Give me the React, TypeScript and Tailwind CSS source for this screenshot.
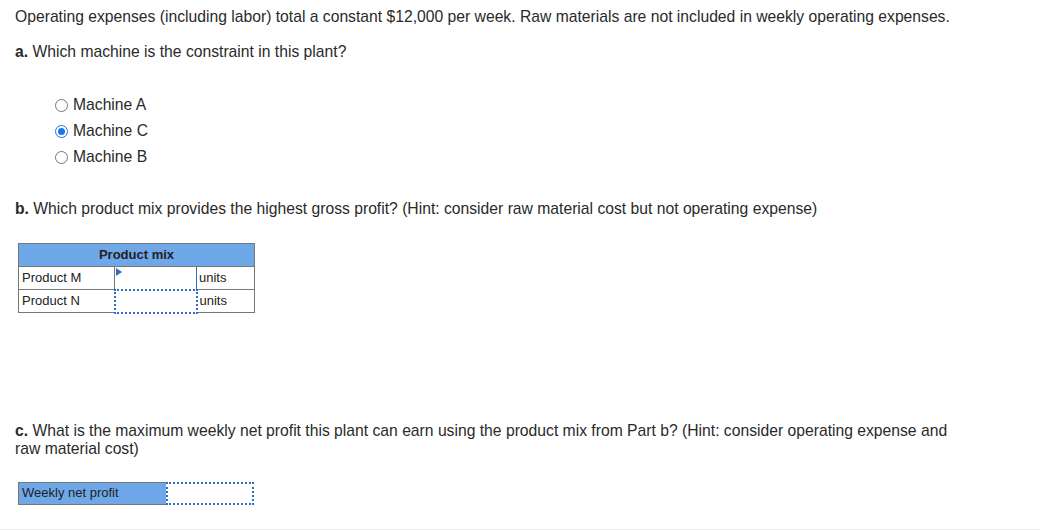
import React from "react";

const Radio: React.FC<{ label: string; checked?: boolean }> = ({ label, checked }) => (
  <label className="flex h-[26px] items-center gap-[5px]">
    {checked ? (
      <span className="flex h-[13px] w-[13px] items-center justify-center rounded-full border-[1.5px] border-[#1a73e8] bg-white">
        <span className="h-[7px] w-[7px] rounded-full bg-[#1a73e8]" />
      </span>
    ) : (
      <span className="h-[13px] w-[13px] rounded-full border border-[#777] bg-white" />
    )}
    <span>{label}</span>
  </label>
);

export default function App() {
  return (
    <div className="min-h-[530px] w-[1041px] border-b border-[#eee] bg-white text-[15.7px] text-[#2a2a2a] font-['Liberation_Sans',Arial,sans-serif]">
      <div className="px-[15px] pt-[7px]">
        <p className="leading-[20px]">
          Operating expenses (including labor) total a constant $12,000 per week. Raw materials are not included in weekly operating expenses.
        </p>
        <p className="mt-[15px] leading-[20px]">
          <b>a.</b> Which machine is the constraint in this plant?
        </p>

        <div className="mt-[30px] ml-[40px]">
          <Radio label="Machine A" />
          <Radio label="Machine C" checked />
          <Radio label="Machine B" />
        </div>

        <p className="mt-[29px] leading-[20px]">
          <b>b.</b> Which product mix provides the highest gross profit? (Hint: consider raw material cost but not operating expense)
        </p>

        <table className="mt-[24px] ml-[3px] border-collapse text-[13px] text-[#222] font-['Liberation_Sans',Arial,sans-serif]">
          <thead>
            <tr>
              <th colSpan={3} className="h-[23px] border border-[#777] bg-[#6fa8e8] text-center font-bold">
                Product mix
              </th>
            </tr>
          </thead>
          <tbody>
            <tr>
              <td className="h-[23px] w-[96px] border border-[#777] px-[3px]">Product M</td>
              <td className="relative w-[82px] border border-[#2d6fc4] p-0">
                <span className="absolute left-[1px] top-[1px] h-0 w-0 border-y-[4px] border-l-[6px] border-y-transparent border-l-[#2d6fc4]" />
              </td>
              <td className="w-[58px] border border-[#777] px-[2px]">units</td>
            </tr>
            <tr>
              <td className="h-[23px] border border-[#777] px-[3px]">Product N</td>
              <td className="border-2 border-dotted border-[#2d6fc4] p-0" />
              <td className="border border-[#777] px-[2px]">units</td>
            </tr>
          </tbody>
        </table>

        <p className="mt-[108px] w-[940px] leading-[18px]">
          <b>c.</b> What is the maximum weekly net profit this plant can earn using the product mix from Part b? (Hint: consider operating expense and raw material cost)
        </p>

        <div className="mt-[24px] ml-[3px] flex h-[23px] w-[236px] text-[13px] text-[#222]">
          <div className="flex w-[148px] items-center border border-r-0 border-[#777] bg-[#6fa8e8] px-[3px]">
            Weekly net profit
          </div>
          <div className="flex-1 border-2 border-dotted border-[#2d6fc4] bg-white" />
        </div>
      </div>
    </div>
  );
}
